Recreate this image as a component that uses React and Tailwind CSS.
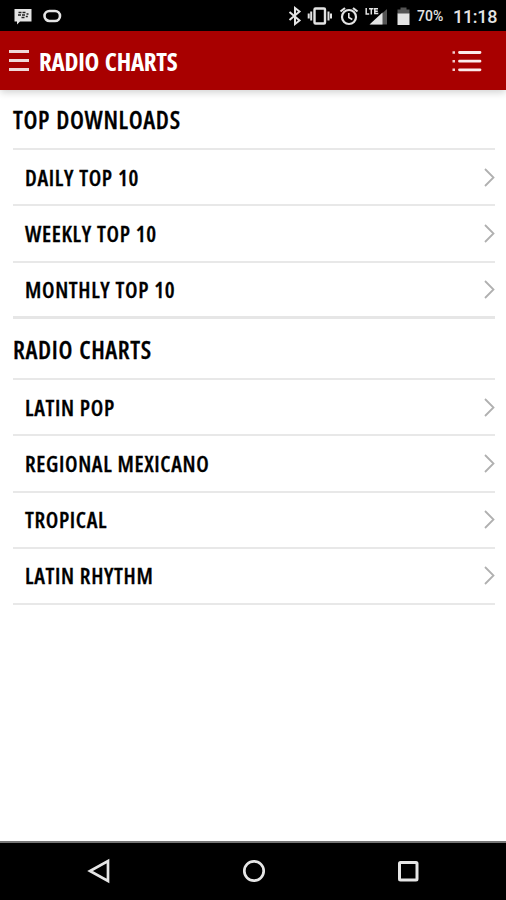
const sections = [
  {
    title: 'TOP DOWNLOADS',
    lastRow: 'border-b-[3px] border-[#e6e6e6]',
    items: ['DAILY TOP 10', 'WEEKLY TOP 10', 'MONTHLY TOP 10'],
  },
  {
    title: 'RADIO CHARTS',
    lastRow: 'border-b-2 border-[#e8e8e8]',
    items: ['LATIN POP', 'REGIONAL MEXICANO', 'TROPICAL', 'LATIN RHYTHM'],
  },
];

function StatusBar() {
  return (
    <div className="flex h-[31px] shrink-0 items-center bg-black font-['Roboto',sans-serif] text-[#e4e4e4] font-stretch-normal">
      <svg className="ml-[14px]" width="19" height="18" viewBox="0 0 19 18">
        <path d="M0.5 2h17v12.5H6L3 17.5v-3H0.5z" fill="currentColor" />
        <path d="M4.500 5.500h3M8.500 5.500h3M4 8h3M8 8h3M12.500 7h2M7.500 10.500h3M11.800 9.500h2" stroke="#222" strokeWidth="1.600" />
      </svg>
      <svg className="ml-[10px]" width="19" height="16" viewBox="0 0 19 16">
        <rect x="1.500" y="3" width="15.500" height="10" rx="5" fill="none" stroke="currentColor" strokeWidth="2.600" />
      </svg>
      <div className="flex-1" />
      {/* bluetooth */}
      <svg width="14" height="20" viewBox="0 0 14 20">
        <path d="M1.500 6l10 8.500L7 18V2l4.500 3.500-10 8.500" fill="none" stroke="currentColor" strokeWidth="2" />
      </svg>
      {/* vibrate */}
      <svg className="ml-[5px]" width="26" height="20" viewBox="0 0 26 20">
        <rect x="7.500" y="2.500" width="10.500" height="15" rx="1" fill="none" stroke="currentColor" strokeWidth="2.400" />
        <path d="M4.200 5.500v9M21.500 5.500v9M1.700 7.500v5M24 7.500v5" stroke="currentColor" strokeWidth="2" />
      </svg>
      {/* alarm */}
      <svg className="ml-[6px]" width="20" height="20" viewBox="0 0 20 20">
        <circle cx="10" cy="11" r="7" fill="none" stroke="currentColor" strokeWidth="2.200" />
        <path d="M1.500 5.500L6 2M18.500 5.500L14 2" stroke="currentColor" strokeWidth="2.200" />
        <path d="M9.800 7v4.500l3.500 2" fill="none" stroke="currentColor" strokeWidth="1.600" />
      </svg>
      {/* signal */}
      <svg className="ml-[6px]" width="24" height="20" viewBox="0 0 24 20">
        <path d="M22 3v15.500H5z" fill="#555" />
        <path d="M17.500 6.500v12H4.500z" fill="currentColor" />
        <path d="M1.200 2v6h3M4 2.700h4.500M6.300 2.700V8.500M13 2.700H9.800V7.500h3.500M9.800 5.200h3" fill="none" stroke="currentColor" strokeWidth="1.500" />
      </svg>
      {/* battery */}
      <svg className="ml-[8px]" width="13" height="20" viewBox="0 0 13 20">
        <path d="M0.500 3.500h3V1.500h6v2h3V8H0.500z" fill="#555" />
        <path d="M0.500 7.500h12V19H0.500z" fill="currentColor" />
      </svg>
      <span className="ml-[7px] mt-[2px] w-[29px] whitespace-nowrap text-[14px] font-medium">70%</span>
      <span className="ml-[7px] mr-[9px] mt-[2px] w-[44px] whitespace-nowrap text-[18px] font-medium tracking-[-0.3px]">11:18</span>
    </div>
  );
}

function Header() {
  return (
    <div className="relative z-10 flex h-[59px] shrink-0 items-center bg-[#a80000] shadow-[0_2px_8px_rgba(0,0,0,0.2)]">
      <div className="ml-[9px] flex w-[20px] flex-col gap-[6px]">
        <div className="h-[3px] bg-[#f0d8d8]" />
        <div className="h-[3px] bg-[#f0d8d8]" />
        <div className="h-[3px] bg-[#f0d8d8]" />
      </div>
      <div className="ml-[10px] pt-[2px] text-[25px] font-bold tracking-[-0.25px] text-white [word-spacing:1.5px]">RADIO CHARTS</div>
      <svg className="ml-auto mr-[24px]" width="30" height="24" viewBox="0 0 30 24">
        <path d="M7.500 3.500h20.500M7.500 12.200h20.500M7.500 20.800h20.500" stroke="#fbeaea" strokeWidth="2.800" strokeLinecap="round" />
        <path d="M0.500 3.500h2.500M0.500 12.200h2.500M0.500 20.800h2.500" stroke="#f0cccc" strokeWidth="2.400" />
      </svg>
    </div>
  );
}

function Row({ name, border }) {
  return (
    <li className={`flex h-[56.25px] items-center justify-between pl-3 ${border}`}>
      <span className="text-[22px] font-semibold tracking-[0.65px] [-webkit-text-stroke:0.3px_black] [word-spacing:0.5px]">
        {name}
      </span>
      <svg width="11" height="19" viewBox="0 0 11 19">
        <path d="M1 1l8.500 8.500L1 18" fill="none" stroke="#b0b0b0" strokeWidth="1.800" />
      </svg>
    </li>
  );
}

function NavBar() {
  return (
    <div className="grid h-[59px] shrink-0 grid-cols-[98px_310px_98px] border-t-2 border-[#777] bg-black pb-[2px]">
      <div className="flex items-center pl-[87px]">
        <svg className="shrink-0" width="24" height="26" viewBox="0 0 24 26">
          <path d="M21 3v20L3 13z" fill="none" stroke="#e6e6e6" strokeWidth="2.700" />
        </svg>
      </div>
      <div className="flex items-center justify-center pl-px">
        <svg width="24" height="24" viewBox="0 0 24 24">
          <circle cx="12" cy="12" r="9.700" fill="none" stroke="#e6e6e6" strokeWidth="2.700" />
        </svg>
      </div>
      <div className="-ml-[11px] flex items-center">
        <svg className="shrink-0" width="22" height="22" viewBox="0 0 22 22">
          <rect x="2.500" y="2.500" width="17.500" height="17.500" rx="1" fill="none" stroke="#e6e6e6" strokeWidth="3" />
        </svg>
      </div>
    </div>
  );
}

export default function App() {
  return (
    <div className="flex h-[900px] w-[506px] flex-col overflow-hidden bg-white font-['Open_Sans',sans-serif] text-black font-stretch-condensed">
      <StatusBar />
      <Header />
      <div className="flex-1 pl-[13px] pr-[11px]">
        {sections.map((section) => (
          <div key={section.title} className="mb-[1.250px]">
            <h2 className="flex h-[60px] items-center border-b-2 border-[#e8e8e8] pt-[2px] text-[24.5px] font-semibold tracking-[0.65px] [-webkit-text-stroke:0.3px_black] [word-spacing:1px]">
              {section.title}
            </h2>
            <ul>
              {section.items.map((name, i) => (
                <Row
                  key={name}
                  name={name}
                  border={i === section.items.length - 1 ? section.lastRow : 'border-b-2 border-[#e8e8e8]'}
                />
              ))}
            </ul>
          </div>
        ))}
      </div>
      <NavBar />
    </div>
  );
}
